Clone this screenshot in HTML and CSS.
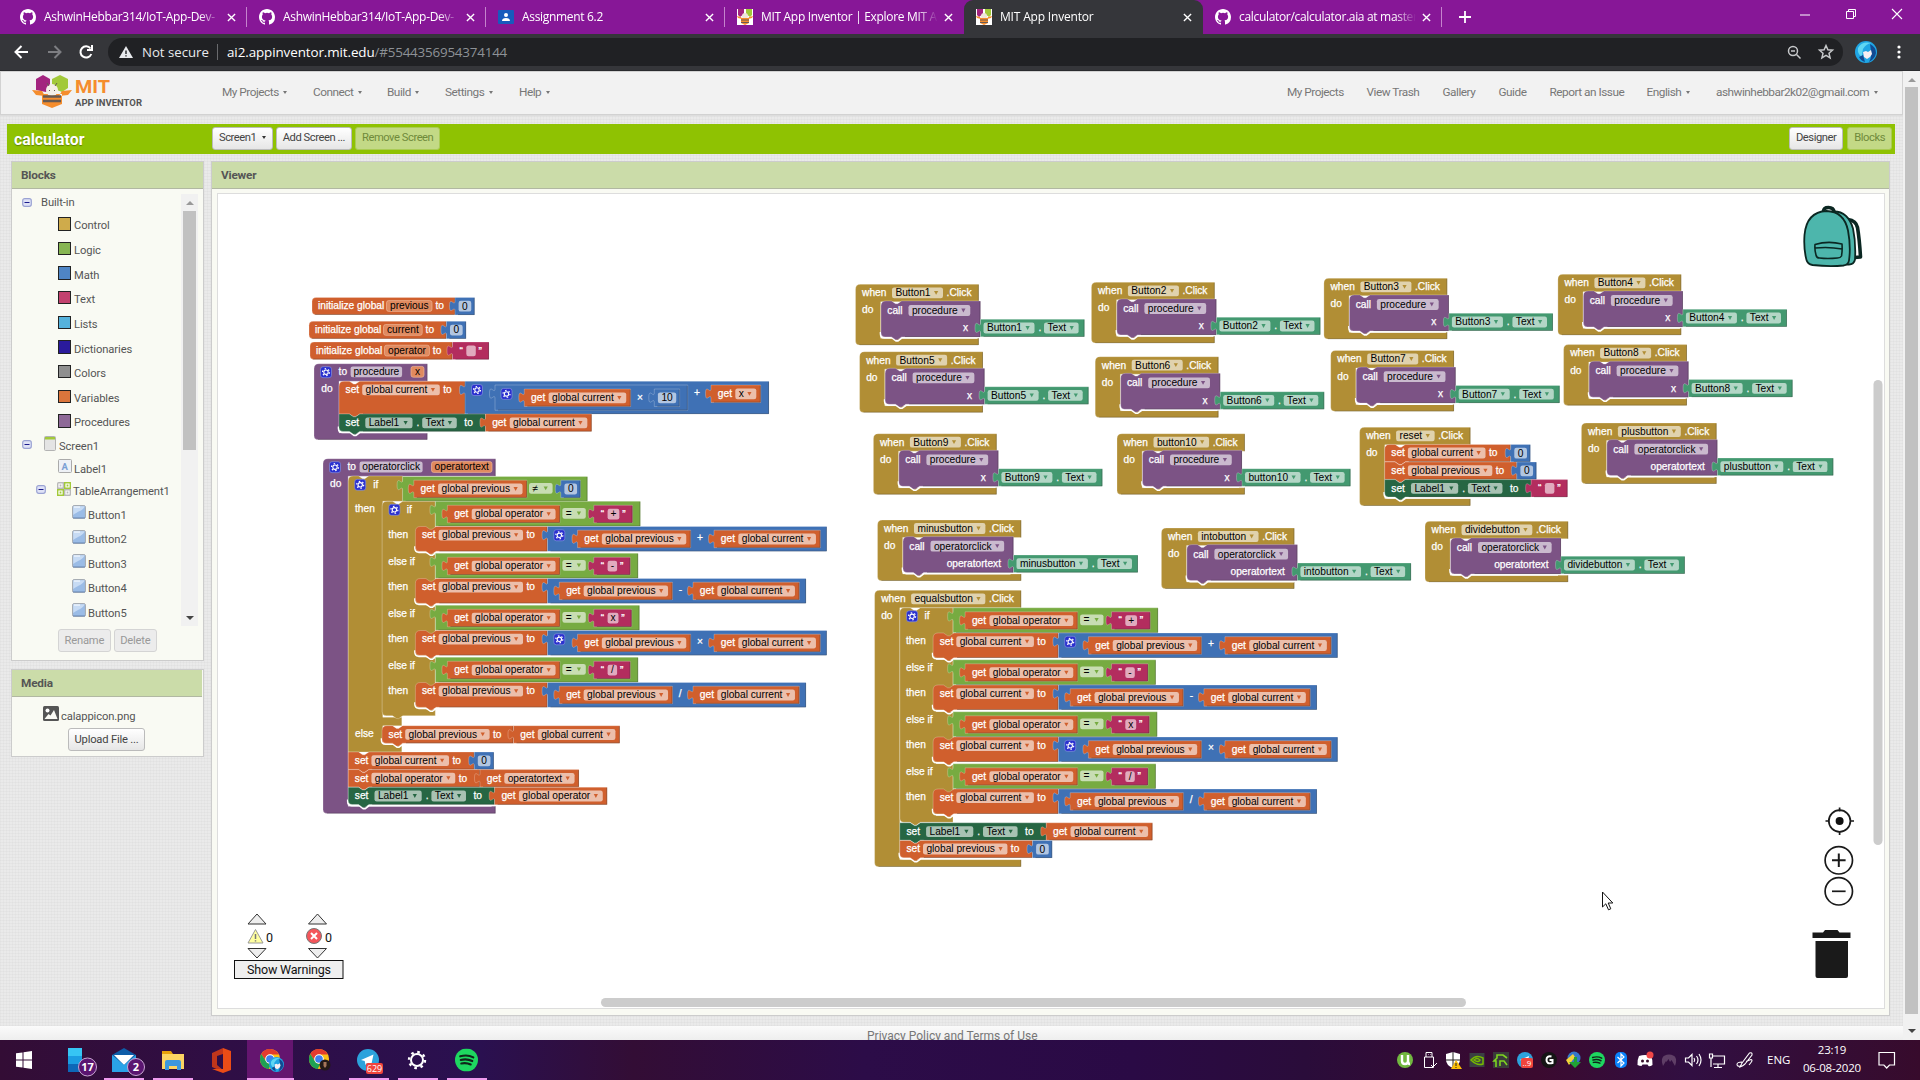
FILE: index.html
```html
<!DOCTYPE html>
<html lang="en">
<head>
<meta charset="utf-8">
<title>MIT App Inventor</title>
<link rel="stylesheet" href="styles.css">
</head>
<body>
<svg width="0" height="0" class="defs">
  <symbol id="github" viewBox="0 0 16 16"><path fill="#fff" d="M8 0C3.58 0 0 3.58 0 8c0 3.54 2.29 6.53 5.47 7.59.4.07.55-.17.55-.38 0-.19-.01-.82-.01-1.49-2.01.37-2.53-.49-2.69-.94-.09-.23-.48-.94-.82-1.13-.28-.15-.68-.52-.01-.53.63-.01 1.08.58 1.23.82.72 1.21 1.87.87 2.33.66.07-.52.28-.87.51-1.07-1.78-.2-3.64-.89-3.64-3.95 0-.87.31-1.59.82-2.15-.08-.2-.36-1.02.08-2.12 0 0 .67-.21 2.2.82a7.6 7.6 0 0 1 4 0c1.53-1.04 2.2-.82 2.2-.82.44 1.1.16 1.92.08 2.12.51.56.82 1.27.82 2.15 0 3.07-1.87 3.75-3.65 3.95.29.25.54.73.54 1.48 0 1.07-.01 1.93-.01 2.2 0 .21.15.46.55.38A8 8 0 0 0 16 8c0-4.42-3.58-8-8-8z"/></symbol>
  <symbol id="bee" viewBox="0 0 16 16"><rect width="16" height="16" fill="#fff"/><path fill="#a3247f" d="M1 0h6v5l-4 3-2-2z"/><path fill="#a2c93a" d="M9 0h6v6l-2 2-4-3z"/><path fill="#f58d2d" d="M0 7l4 1 1 2-4-1zM16 7l-4 1-1 2 4-1z"/><circle cx="8" cy="7" r="3" fill="#efe6da"/><path fill="#f58d2d" d="M4 9h8v5l-4 2-4-2z"/><path stroke="#6b5b52" d="M4 11h8M4 13.500h8"/></symbol>
  <symbol id="x" viewBox="0 0 10 10"><path stroke="#fff" stroke-width="1.500" d="M1 1l8 8M9 1l-8 8"/></symbol>
  <symbol id="minus" viewBox="0 0 10 9"><rect x=".7" y=".7" width="8.600" height="7.600" rx="2" fill="#dfe2f6" stroke="#9aa2d3" stroke-width="1.200"/><path d="M2.500 4.500h5" stroke="#1b1b8c"/></symbol>
  <symbol id="btn" viewBox="0 0 14 14"><rect x=".6" y=".6" width="12.800" height="12.800" rx="1.500" fill="#9bbce6" stroke="#a3a7ad"/><path fill="#c7dbf4" d="M1.200 1.200h11.500C11 6 6 6 1.200 10z"/><path d="M2 2h6" stroke="#fff"/><path d="M1 12.900h12" stroke="#6f8fbe"/></symbol>
  <symbol id="chrome" viewBox="0 0 24 24"><circle cx="12" cy="12" r="11" fill="#fbc116"/><path fill="#e33b2e" d="M2.500 6.500A11 11 0 0 1 21.600 7H12a5 5 0 0 0-4.500 7.200z"/><path fill="#1fa154" d="M2.500 6.500l5.300 8.300A5 5 0 0 0 13.500 17l-3 5.900A11 11 0 0 1 2.500 6.500z"/><circle cx="12" cy="12" r="5.200" fill="#fff"/><circle cx="12" cy="12" r="4.200" fill="#3f80ee"/></symbol>
  <symbol id="avatar" viewBox="0 0 22 22"><circle cx="11" cy="11" r="11" fill="#1fa5e4"/><path fill="#5fd6f3" d="M3 7q4-7 13-5-5 1-8 6-1 4-1 8-5-3-4-9z"/><path fill="#124a92" d="M15 3q6 3 6 9-1 6-7 9 3-5 2-11zM4 16l4-2 2 7q-4-1-6-5z"/><path fill="#f7eef2" d="M8 11l3-1 2 1 3-2 1 4-2 3-3 2-3-2z"/></symbol>
  <symbol id="spotify" viewBox="0 0 22 22"><circle cx="11" cy="11" r="11" fill="#1ed760"/><path fill="none" stroke="#10251a" stroke-width="2" stroke-linecap="round" d="M5 7.500q7-2 12.500 1M5.500 11q6-1.500 11 1M6 14.300q5-1 9 1"/></symbol>
  <symbol id="plane" viewBox="0 0 22 22"><circle cx="11" cy="11" r="11" fill="#2ca2dc"/><path fill="#fff" d="M4 11l12.500-5.500L14 17l-4-3-1.500 2-.8-4z"/></symbol>
</svg>

<div class="tabs">
  <div class="tab"><svg class="fav"><use href="#github"/></svg><span>AshwinHebbar314/IoT-App-Dev-</span><svg class="x"><use href="#x"/></svg></div>
  <div class="tab"><svg class="fav"><use href="#github"/></svg><span>AshwinHebbar314/IoT-App-Dev-</span><svg class="x"><use href="#x"/></svg></div>
  <div class="tab"><svg class="fav" viewBox="0 0 16 16"><rect y="1" width="16" height="14" rx="1" fill="#185abc"/><circle cx="8" cy="6" r="2" fill="#fff"/><path d="M4 12q0-3 4-3t4 3z" fill="#fff"/></svg><span>Assignment 6.2</span><svg class="x"><use href="#x"/></svg></div>
  <div class="tab nosep"><svg class="fav"><use href="#bee"/></svg><span>MIT App Inventor | Explore MIT A</span><svg class="x"><use href="#x"/></svg></div>
  <div class="tab active"><svg class="fav"><use href="#bee"/></svg><span>MIT App Inventor</span><svg class="x"><use href="#x"/></svg></div>
  <div class="tab"><svg class="fav"><use href="#github"/></svg><span>calculator/calculator.aia at master</span><svg class="x"><use href="#x"/></svg></div>
  <svg class="plus" viewBox="0 0 12 12"><path d="M6 0v12M0 6h12" stroke="#fff" stroke-width="1.800"/></svg>
  <div class="winbtns">
    <svg viewBox="0 0 46 28"><path d="M18 15h10" stroke="#fff"/></svg>
    <svg viewBox="0 0 46 28"><path d="M18.500 11.500h7v7h-7zM20.500 11v-1.500h7v7h-2" fill="none" stroke="#fff"/></svg>
    <svg viewBox="0 0 46 28"><path d="M18 9l10 10M28 9l-10 10" stroke="#fff" stroke-width="1.100"/></svg>
  </div>
</div>

<div class="toolbar">
  <svg class="nav" viewBox="0 0 108 36" fill="none" stroke-width="2"><path stroke="#fff" d="M28 18H16M21.500 12l-6 6 6 6"/><path stroke="#7d7e82" d="M48 18h12M54.500 12l6 6-6 6"/><path stroke="#fff" d="M90.500 14.500a5.600 5.600 0 1 0 .8 5.500M92 11v5h-5"/></svg>
  <div class="omni">
    <svg class="warn" viewBox="0 0 14 12"><path fill="#e8eaed" d="M7 0l7 12H0z"/><path stroke="#202124" stroke-width="1.400" d="M7 4.500v3.500M7 9.200v1.400"/></svg>
    <span class="ns">Not secure</span><i></i><span class="url">ai2.appinventor.mit.edu<em>/#5544356954374144</em></span>
    <svg class="omniicons" viewBox="0 0 60 28" fill="none" stroke="#c6c8ca" stroke-width="1.500"><circle cx="13" cy="13" r="4.500"/><path d="M16.500 16.500l4 4M11 13h4"/><path d="M46 7.500l1.900 4.300 4.600.4-3.500 3.100 1.100 4.600L46 17.400l-4.100 2.500 1.100-4.600-3.500-3.100 4.600-.4z"/></svg>
  </div>
  <svg class="avatar"><use href="#avatar"/></svg>
  <svg class="dots" viewBox="0 0 4 16" fill="#fff"><circle cx="2" cy="3" r="1.600"/><circle cx="2" cy="8" r="1.600"/><circle cx="2" cy="13" r="1.600"/></svg>
</div>

<div class="window">
  <div class="page">
    <header>
      <svg class="logo" viewBox="0 0 114 36">
        <path fill="#a3247f" d="M4 5l7-4 7 4v9l-4 4-10-2z"/><path fill="#a2c93a" d="M20 5l8-4 8 4v9l-6 4-10-4z"/>
        <path fill="#f58d2d" d="M0 16l10 1 3 5-9-1zM40 16l-10 1-3 5 9-1zM10 20h20v10l-5 2-5 2-5-2-5-2z"/><circle cx="20" cy="16" r="6" fill="#f4efe8"/><path stroke="#665a52" stroke-width="2.400" d="M11 22.500h18M11 27h18"/><path stroke="#665a52" d="M17 12l-2-3M23 12l2-3M17.500 16v1M22.500 16v1"/>
        <text x="43" y="19" class="mit" textLength="35" lengthAdjust="spacingAndGlyphs">MIT</text><text x="43" y="31.500" class="ai" textLength="67" lengthAdjust="spacingAndGlyphs">APP INVENTOR</text>
      </svg>
      <nav class="left"><a>My Projects <b></b></a><a>Connect <b></b></a><a>Build <b></b></a><a>Settings <b></b></a><a>Help <b></b></a></nav>
      <nav class="right"><a>My Projects</a><a>View Trash</a><a>Gallery</a><a>Guide</a><a>Report an Issue</a><a>English <b></b></a><a>ashwinhebbar2k02@gmail.com <b></b></a></nav>
    </header>
    <div class="project">
      <h1>calculator</h1>
      <button>Screen1 <b></b></button><button>Add Screen ...</button><button class="off">Remove Screen</button>
      <button class="end">Designer</button><button class="off">Blocks</button>
    </div>
    <main>
      <aside>
        <section class="panel blocks">
          <h2>Blocks</h2>
          <div class="tree">
            <ul>
              <li class="root"><svg><use href="#minus"/></svg>Built-in</li>
              <li class="cat"><i class="c1"></i>Control</li><li class="cat"><i class="c2"></i>Logic</li><li class="cat"><i class="c3"></i>Math</li><li class="cat"><i class="c4"></i>Text</li><li class="cat"><i class="c5"></i>Lists</li><li class="cat"><i class="c6"></i>Dictionaries</li><li class="cat"><i class="c7"></i>Colors</li><li class="cat"><i class="c8"></i>Variables</li><li class="cat"><i class="c9"></i>Procedures</li>
              <li class="scr"><svg class="m"><use href="#minus"/></svg><svg class="ic" viewBox="0 0 12 15"><rect x=".5" y=".5" width="11" height="14" rx="1" fill="#e4e4e4" stroke="#b3b3b3"/><path fill="#a2c93a" d="M1 1h10v2.500H1z"/></svg>Screen1</li>
              <li class="lab"><svg class="ic" viewBox="0 0 14 14"><rect x=".5" y=".5" width="13" height="13" rx="1" fill="#eef1f6" stroke="#aaa"/><text x="3.500" y="10.800" class="A">A</text></svg>Label1</li>
              <li class="tab1"><svg class="m"><use href="#minus"/></svg><svg class="ic" viewBox="0 0 14 14"><rect width="14" height="14" rx="1.500" fill="#b9b9b9"/><path fill="#a2c93a" d="M7 0h7v7H7zM0 7h7v7H0z"/><path fill="none" stroke="#fff" stroke-width="1.200" d="M2 2h3v3H2zM9 2h3v3H9zM2 9h3v3H2zM9 9h3v3H9z"/></svg>TableArrangement1</li>
              <li class="b"><svg><use href="#btn"/></svg>Button1</li><li class="b"><svg><use href="#btn"/></svg>Button2</li><li class="b"><svg><use href="#btn"/></svg>Button3</li><li class="b"><svg><use href="#btn"/></svg>Button4</li><li class="b"><svg><use href="#btn"/></svg>Button5</li>
            </ul>
            <div class="scroll small"><u></u><s></s><u class="dn"></u></div>
          </div>
          <div class="actions"><button class="grey">Rename</button><button class="grey">Delete</button></div>
        </section>
        <section class="panel media">
          <h2>Media</h2>
          <p><svg viewBox="0 0 16 15"><rect width="16" height="15" rx="1.500" fill="#555"/><path fill="#fafaf4" d="M1.500 13l4-5 2 1.500L11 4l3.500 9z"/><circle cx="4.500" cy="4.500" r="2" fill="#fff"/></svg>calappicon.png</p>
          <button>Upload File ...</button>
        </section>
      </aside>
      <section class="panel viewer">
        <h2>Viewer</h2>
        <svg id="workspace" viewBox="218 194 1666 814">
          <g id="blocks"></g>
          <g class="line">
            <path class="tri" d="M257 914l9 10h-18zM317.500 914l9 10h-18zM257 958l9-9.500h-18zM317.500 958l9-9.500h-18z"/>
            <path d="M255.500 929.500l7.500 13.500h-15z" fill="#ffffa0" stroke="#999"/><path d="M255.500 934v5M255.500 940.300v1.200" stroke="#777" stroke-width="1.500"/>
            <circle cx="314" cy="936" r="7.500" fill="#f4565b" stroke="#777"/><path d="M311 933l6 6M317 933l-6 6" stroke="#fff" stroke-width="2"/>
            <rect x="234.500" y="960.500" width="108.500" height="18" fill="#efefef" stroke="#111"/>
          </g>
          <g class="wtext"><text x="266" y="942">0</text><text x="325" y="942">0</text><text x="247" y="974" textLength="84">Show Warnings</text></g>
          <rect x="601" y="998" width="865" height="9" rx="4.500" fill="#ccc"/>
          <rect x="1873.500" y="380" width="9" height="465" rx="4.500" fill="#ccc"/>
          <g fill="none" stroke="#1a1a1a" stroke-width="1.700">
            <circle cx="1839.600" cy="821" r="10.800"/><circle cx="1839.600" cy="821" r="4" fill="#111" stroke="none"/><path d="M1839.600 807.500v4M1839.600 831v4M1825.500 821h4M1850 821h4"/>
            <circle cx="1838.800" cy="860.300" r="13.700"/><path d="M1832 860.300h13.600M1838.800 853.500v13.600" stroke-width="2"/>
            <circle cx="1838.800" cy="891.300" r="13.700"/><path d="M1832 891.300h13.600"/>
          </g>
          <path fill="#1a1a1a" d="M1812.500 932.500h10.500l2-2.500h12.500l2 2.500h11v5.500h-38zM1815.500 941h32.500v35q0 2-2 2h-28.500q-2 0-2-2z"/>
          <g stroke="#0b2722" stroke-width="1.800" fill="#4db6ac" stroke-linejoin="round">
            <path fill="none" stroke-width="3.500" d="M1823.500 211.500q0-4 5-4t6 5"/>
            <path fill="none" stroke-width="3.600" d="M1848 219.500q8 1 9.500 8 2 12 3 29.500l-6 .5"/>
            <path d="M1834 211.500q14 0 19 17 3 14 2 31-1 5-6 5h-10z"/>
            <path d="M1826.500 211q-20 1-22 24-1 14 2 25 1 4 6 5 17 2 31 .5 5-1 5.500-5 2-14-1-30-4-19-21.500-19.500z"/>
            <path d="M1815 244.500q13-4 27-.5.500 7-.5 12-1 2-4 2-10 1-18 0-3 0-3.500-3-1.500-5-1-10.500zM1815 248q14-1.500 27 1" stroke-width="1.600"/>
          </g>
          <path fill="#fff" stroke="#111" d="M1602.500 892v15l3.300-3.200 2.700 6 2.300-1-2.600-5.800h4.600z"/>
        </svg>
      </section>
    </main>
    <footer>Privacy Policy and Terms of Use</footer>
  </div>
  <div class="scroll big"><u></u><s></s><u class="dn"></u></div>
</div>

<div class="taskbar">
  <div class="apps">
    <div class="app"><svg viewBox="0 0 49 40"><path fill="#fff" d="M16 13.300l6.500-.9v7.200H16zM23.500 12.300l8.500-1.200v8.500h-8.500zM16 20.500h6.500v7.100l-6.500-.9zM23.500 20.500H32v8.400l-8.500-1.200z"/></svg></div>
    <div class="app"><svg viewBox="0 0 49 40"><path fill="#36c5f4" d="M19 8h14v8H19z"/><path fill="#1b9de2" d="M19 16h14v8H19z"/><path fill="#0d67b8" d="M19 24h14v8H19z"/><circle cx="38.500" cy="27" r="9" fill="#5a1570" stroke="#c9a6d3"/><text x="38.500" y="31" class="bd">17</text></svg></div>
    <div class="app on"><svg viewBox="0 0 49 40"><path fill="#0f5da8" d="M14 15l12-7 12 7v16H14z"/><path fill="#fff" d="M16 15h20l-10 10z"/><path fill="#2aa3e8" d="M14 15l12 10 12-10v17H14z"/><circle cx="38" cy="27" r="8.500" fill="#5a1570" stroke="#c9a6d3"/><text x="38" y="31" class="bd">2</text></svg></div>
    <div class="app on wide"><svg viewBox="0 0 49 40"><path fill="#e7a10b" d="M15 11h9l2 3h11v4H15z"/><path fill="#fcd462" d="M15 14h22v15H15z"/><path fill="#3b97dd" d="M18 22q0-2 2-2h12q2 0 2 2v8h-4v-4h-8v4h-4z"/></svg></div>
    <div class="app"><svg viewBox="0 0 49 40"><path fill="#c1361b" d="M16 13l11-5v6l-6 2v9l6 5v2l-11-5z"/><path fill="#ea4c16" d="M27 8l8 3v19l-8 3-11-4h11z"/></svg></div>
    <div class="app on active"><svg viewBox="0 0 49 40"><use href="#chrome" x="14" y="8" width="22" height="22"/><use href="#avatar" x="24" y="17" width="15" height="15"/></svg></div>
    <div class="app"><svg viewBox="0 0 49 40"><use href="#chrome" x="14" y="8" width="22" height="22"/><circle cx="31" cy="25" r="5.500" fill="#241a17"/><path fill="#a5765b" d="M29.500 22h3v4l-1.500 2-1.500-2z"/></svg></div>
    <div class="app on"><svg viewBox="0 0 49 40"><use href="#plane" x="14" y="8" width="22" height="24"/><rect x="23" y="23" width="17" height="11" rx="2" fill="#f0443c"/><text x="31.500" y="31.800" class="bd s">629</text></svg></div>
    <div class="app on"><svg viewBox="0 0 49 40" fill="none" stroke="#fff"><circle cx="25" cy="20" r="6" stroke-width="2"/><circle cx="25" cy="20" r="8" stroke-width="2.400" stroke-dasharray="2.600 3.683"/></svg></div>
    <div class="app on"><svg viewBox="0 0 49 40"><use href="#spotify" x="14" y="8.500" width="23" height="23"/></svg></div>
  </div>
  <div class="tray">
    <svg viewBox="0 0 24 24"><circle cx="12" cy="12" r="8" fill="#72b840"/><path fill="none" stroke="#fff" stroke-width="2.400" d="M9 7v6q0 3 3 3t3-3V7M15 13q0 3 2 3"/></svg>
    <svg viewBox="0 0 24 24" fill="none" stroke="#fff"><path d="M9 9V4.500h6V9M7.500 9h9v10.500h-9zM11 6.500h.5M13 6.500h.5M14 17l2 2 4-4"/></svg>
    <svg viewBox="0 0 24 24"><path fill="#fff" d="M5 6l7-2 7 2v6q0 5-7 8-7-3-7-8z"/><path stroke="#222" d="M12 4v16M5 12h14"/><path fill="#fbbc05" d="M15 12l6 9H10z"/><path stroke="#222" d="M15 15v3M15 19v1"/></svg>
    <svg viewBox="0 0 24 24"><path fill="#3a4043" d="M4.500 5h15v14h-15z"/><path fill="none" stroke="#76b900" stroke-width="1.500" d="M6 12q5-6 12-2v6q-6 2-12-4zM9 12q3-3 6 0-2 3-6 0z"/></svg>
    <svg viewBox="0 0 24 24"><path fill="#3a3b3a" d="M4 4h16v16H4z"/><path fill="none" stroke="#7ed321" stroke-width="1.600" d="M7 19v-6H5l3-3V7h6l4 3M11 18v-5h4l3 4"/></svg>
    <svg viewBox="0 0 24 24"><use href="#plane" x="4" y="4" width="16" height="16"/><rect x="8" y="10" width="12" height="10" rx="2" fill="#f0443c"/><text x="14" y="18" class="bd t">..9</text></svg>
    <svg viewBox="0 0 24 24"><circle cx="12" cy="12" r="8" fill="#151515"/><path fill="none" stroke="#fff" stroke-width="2" d="M14.500 8.500q-5-1-5 3.500t6 3v-3h-3"/></svg>
    <svg viewBox="0 0 24 24"><circle cx="13" cy="10" r="6.500" fill="#3577c9"/><path fill="#f4d33a" d="M5 12l7-6 2 3-6 8z"/><path fill="#21a336" d="M13 9h3v5h4l-6 6-6-6h5z"/></svg>
    <svg viewBox="0 0 24 24"><use href="#spotify" x="4" y="4" width="16" height="16"/></svg>
    <svg viewBox="0 0 24 24"><rect x="6" y="4" width="12" height="16" rx="5" fill="#0a82fa"/><path fill="none" stroke="#fff" stroke-width="1.200" d="M8.500 9l6.500 6-3 3V6l3 3-6.500 6"/></svg>
    <svg viewBox="0 0 24 24"><path fill="#fff" d="M6 8q6-2 12 0 2 4 1.500 9-3 2-4 1l-1-1.500h-5L8.500 18q-2 0-4-1Q4 12 6 8z"/><circle cx="9.500" cy="13" r="1.500" fill="#38102c"/><circle cx="14.500" cy="13" r="1.500" fill="#38102c"/><circle cx="17" cy="7" r="3.500" fill="#f04747"/></svg>
    <svg viewBox="0 0 24 24"><path fill="#5f3f66" d="M6 18q-4-11 6-11.500Q22 7 18 18l-3.500-6-1.500 2-1.500-3-2 3-.5-1z"/></svg>
    <svg viewBox="0 0 24 24" fill="none" stroke="#fff" stroke-width="1.200"><path d="M4.500 10h3L11 6.500v11L7.500 14h-3zM13 10q1.500 2 0 4M15.500 8q3 4 0 8M18 6q4 6 0 12"/></svg>
    <svg viewBox="0 0 24 24" fill="none" stroke="#fff" stroke-width="1.200"><path d="M8 8h11.500v8H8M13 16v3M9 19.500h8M4.500 6h3v4h-3zM6 10v9"/></svg>
    <svg viewBox="0 0 24 24" fill="none" stroke="#fff" stroke-width="1.100"><path d="M9 15L16.500 5q3-1 2.500 2l-7 9q-2 2-5 3 1-2 2-4zM9 14q-5 0-5 2.500T8.500 18M13 13.500l5-2q2 .5 0 3l-2 2.500"/></svg>
  </div>
  <span class="lang">ENG</span>
  <div class="clock">23:19<br>06-08-2020</div>
  <svg class="note" viewBox="0 0 18 18"><path fill="none" stroke="#fff" stroke-width="1.200" d="M1 1.500h15.500v12.500h-5l-2.800 3-2.800-3H1z"/></svg>
</div>
<script src="blocks.js"></script>
</body>
</html>
```
FILE: styles.css
```css
* { box-sizing: border-box; }
body { margin: 0; width: 1920px; height: 1080px; overflow: hidden; display: flex; flex-direction: column; font: 12px Roboto, sans-serif; background: #e9e9e9; }
svg { display: block; flex: none; }
.defs { position: absolute; }
ul, h1, h2, p { margin: 0; padding: 0; list-style: none; }
b { display: inline-block; border: 2.500px solid transparent; border-top: 3.500px solid #777; border-bottom: 0; margin-left: 2px; vertical-align: 2px; }

.tabs { height: 34px; flex: none; background: #871797; display: flex; align-items: center; padding-left: 8px; color: #fff; font: 12px "Open Sans", sans-serif; }
.tab { width: 239px; height: 34px; display: flex; align-items: center; padding: 0 11px 0 12px; }
.tab:not(.active):not(.nosep) { background: linear-gradient(#c583cd, #c583cd) right center / 1px 20px no-repeat; }
.tab span { flex: 1; margin: -1px 6px 0 8px; overflow: hidden; white-space: nowrap; letter-spacing: -.32px; -webkit-mask: linear-gradient(90deg, #000 88%, transparent); mask: linear-gradient(90deg, #000 88%, transparent); }
.tab.active { background: #35363a; border-radius: 9px 9px 0 0; }
.tab.active span { letter-spacing: -.18px; }
.fav { width: 16px; height: 16px; }
.x { width: 9px; height: 9px; }
.plus { width: 12px; height: 12px; margin-left: 17px; }
.winbtns { display: flex; margin-left: auto; }
.winbtns svg { width: 46px; height: 28px; margin-top: -6px; }

.toolbar { height: 37px; flex: none; background: #35363a; border-bottom: 1px solid #2a2b2e; display: flex; align-items: center; }
.nav { width: 108px; height: 36px; }
.omni { width: 1735px; height: 28px; border-radius: 14px; background: #202124; display: flex; align-items: center; padding-left: 11px; color: #fff; font: 14px "Open Sans", sans-serif; }
.warn { width: 14px; height: 12px; }
.ns { margin-left: 9px; width: 75px; font-size: 13.200px; white-space: nowrap; color: #e8eaed; }
.omni i { width: 1px; height: 16px; background: #696a6d; margin-right: 9px; }
.url { font-size: 13.400px; letter-spacing: -.09px; }
.url em { font-style: normal; color: #8d9196; letter-spacing: -.2px; }
.omniicons { width: 60px; height: 28px; margin-left: auto; margin-right: 3px; }
.avatar { width: 22px; height: 22px; margin-left: 12px; }
.dots { width: 4px; height: 16px; margin-left: 20px; }

.window { flex: 1; min-height: 0; display: flex; }
.page { width: 1903px; display: flex; flex-direction: column; background: repeating-linear-gradient(90deg, rgba(0,0,0,.018) 0 1px, transparent 1px 3px), repeating-linear-gradient(rgba(0,0,0,.022) 0 1px, transparent 1px 3px), #eaeaea; }
header { height: 44px; flex: none; border: 1px solid #d2d2d2; background: #f2f2f2; display: flex; align-items: center; color: #777; font-size: 11.800px; letter-spacing: -.48px; box-shadow: 0 1px 1px #ddd; }
.logo { width: 114px; height: 36px; margin: -3px 0 0 31px; letter-spacing: 0; }
.mit { font: bold 19px Roboto, sans-serif; fill: #f58d2d; }
.ai { font: bold 9.500px Roboto, sans-serif; fill: #555; }
nav { display: grid; white-space: nowrap; margin-top: -2px; }
nav.left { margin-left: 76px; grid-template-columns: 91px 74px 58px 74px 60px; }
nav.right { margin-left: auto; margin-right: 4px; grid-template-columns: 79.500px 76px 56px 51px 97px 69.500px 182px; }

.project { height: 30px; flex: none; margin: 9px 8px 7px 7px; background: #8fc202; display: flex; gap: 3px; padding-top: 3px; align-items: flex-start; }
h1 { width: 202px; padding-left: 7px; color: #fff; font: bold 15.800px/26px Roboto, sans-serif; text-shadow: 0 1px 1px #5f8000; }
button { height: 23px; padding: 0 6px; border: 1px solid #bbb; border-radius: 3px; background: linear-gradient(#fff, #e6e6e6); font: 11.200px/19px Roboto, sans-serif; color: #444; white-space: nowrap; letter-spacing: -.45px; }
.project button { padding-bottom: 2px; }
.project b { border-top-color: #333; margin-left: 3px; }
.off { background: #c3d986; border-color: #aacb55; color: #6f8a3b; }
.end { margin-left: auto; }
.project button:last-child { margin: 0 3px 0 1px; }

main { display: flex; gap: 7px; padding-left: 11px; flex: none; height: 865px; }
aside { width: 193px; display: flex; flex-direction: column; gap: 8px; }
.panel { border: 1px solid #ccc; background: #f9faf3; display: flex; flex-direction: column; }
h2 { height: 27px; flex: none; background: #cbdca9; border-bottom: 1px solid #b1b8a2; font: bold 11.800px/26px Roboto, sans-serif; letter-spacing: -.2px; color: #555; padding-left: 9px; }
.blocks { height: 500px; }
.tree { display: flex; height: 432px; margin: 5px 5px 0 0; justify-content: space-between; font-size: 11.200px; color: #555; letter-spacing: -.08px; }
.tree li { display: flex; align-items: center; height: 24.650px; }
.tree .root { height: 19.500px; padding-bottom: 2px; }
.root svg, .m { width: 10px; height: 9px; }
.root svg { margin: 0 9px 0 10px; }
.cat { padding-left: 46px; }
.cat i { width: 13px; height: 13.500px; border: 1px solid #222; margin-right: 3px; margin-top: -4px; }
.c1 { background: #cfab4b; } .c2 { background: #86b552; } .c3 { background: #4f85c5; } .c4 { background: #c3426f; } .c5 { background: #55b2dc; } .c6 { background: #2a1a9c; } .c7 { background: #8f8f8f; } .c8 { background: #db753c; } .c9 { background: #8e6997; }
.tree .scr, .tree .lab, .tree .tab1 { height: 22.500px; }
.scr .m { margin: -4px 12px 0 10px; }
.scr .ic { width: 12px; height: 15px; margin: -6px 3px 0 0; }
.lab .ic { width: 14px; height: 14px; margin: -6px 2px 0 46px; }
.A { font: bold 9.500px Roboto, sans-serif; fill: #7b9fd4; }
.tab1 .m { margin: -4px 11px 0 24px; }
.tab1 .ic { width: 14px; height: 14px; margin: -5px 2px 0 0; }
.tree .b { height: 24.500px; }
.b svg { width: 14px; height: 14px; margin: -6px 2px 0 60px; }
.scroll { display: flex; flex-direction: column; align-items: center; background: #f1f1f1; width: 17px; }
.scroll u { border: 4px solid transparent; border-top: 0; border-bottom: 4px solid #999; }
.scroll .dn { border-top: 4px solid #444; border-bottom: 0; margin-top: auto; }
.scroll s { background: #c1c1c1; width: 13px; }
.small u { margin: 7px 0 6px; } .small s { height: 239px; }
.big u { margin: 7px 0 5px; } .big s { height: 927px; } .big .dn { margin-bottom: 7px; }
.actions { display: flex; gap: 3px; padding: 3px 0 0 46px; }
.actions button, .media button { letter-spacing: -.2px; }
.grey { background: #ececec; border-color: #d4d4d4; color: #999; padding: 0 5.500px; }
.media { height: 88px; align-items: flex-start; }
.media h2 { width: 190px; }
.media p { display: flex; height: 31px; padding: 8px 0 0 31px; font-size: 11.200px; color: #555; align-items: center; gap: 2px; letter-spacing: -.12px; }
.media p svg { width: 16px; height: 15px; margin-top: -6px; }
.media button { margin-left: 56px; padding: 0 5.500px; }
.viewer { width: 1679px; height: 855px; }
#workspace { width: 1668px; height: 816px; margin: 4px 0 0 5px; border: 1px solid #ddd; background: #fff; }
.line { stroke-width: 1; }
.tri { fill: #eee; stroke: #333; }
.wtext { font: 12.500px Roboto, sans-serif; fill: #111; }
footer { flex: 1; background: linear-gradient(#fbfbfb, #eee); overflow: hidden; color: #777; font-size: 12px; line-height: 21px; padding-left: 867px; }

#blocks text { font: 10.200px "Liberation Sans", sans-serif; fill: #fff; stroke: #fff; stroke-width: .25; }
#blocks text.f { fill: #000; stroke: none; }

.taskbar { height: 40px; flex: none; display: flex; align-items: center; color: #fff; background: linear-gradient(90deg, #330d35 0, #2f0e45 12%, #2a1050 25%, #330d35 33%, #2c0c48 45%, #2a0a45 59%, #2a0c3a 68%, #3b0a2f 80%, #310f42 88%, #370b2c 100%); font: 12px "Open Sans", sans-serif; }
.apps { display: flex; }
.app { width: 49px; height: 40px; }
.app svg { width: 49px; height: 40px; }
.on { background: linear-gradient(#ee9bee, #ee9bee) 6px 38px / 40px 2px no-repeat; }
.app.active { background: linear-gradient(#ee9bee, #ee9bee) 2px 38px / 48px 2px no-repeat, linear-gradient(#64156f, #64156f) 2px 0 / 46px 40px no-repeat; }
.bd { font: bold 11px "Open Sans", sans-serif; fill: #fff; text-anchor: middle; }
.bd.s { font: 9px "Open Sans", sans-serif; }
.bd.t { font: 8px "Open Sans", sans-serif; }
.tray { margin-left: auto; display: flex; }
.tray svg { width: 24px; height: 24px; }
.tray svg:last-child { margin-left: 4px; }
.lang { width: 24px; margin-left: 10px; font-size: 11.500px; margin-top: -2px; }
.clock { width: 70px; margin: -2px 0 0 6px; text-align: center; line-height: 18.500px; font-size: 11.500px; white-space: nowrap; letter-spacing: -.2px; }
.note { width: 18px; height: 18px; margin: 0 24px 0 11px; }
```
FILE: blocks.js
```js
const C = { var: '#d05f2d', math: '#3f71b5', ctl: '#b18e35', proc: '#7c5385', logic: '#77ab41', text: '#b32d5e', set: '#266643', get: '#439970' };
const ctx = document.createElement('canvas').getContext('2d');
ctx.font = '10.2px "Liberation Sans"';
const tw = s => ctx.measureText(s).width;
let out = '';

// plain label, field (editable), and dropdown; cy is the vertical centre
const label = (x, cy, s, cls = '') => { out += `<text class="${cls}" x="${x}" y="${cy + 3.3}">${s}</text>`; };
const box = (x, cy, w, o = 0.6) => { out += `<rect x="${x}" y="${cy - 5.4}" width="${w}" height="10.8" rx="2.2" fill="#fff" fill-opacity="${o}"/>`; };
const field = (x, cy, s, w = tw(s) + 7) => { box(x, cy, w); label(x + (w - tw(s)) / 2, cy, s, 'f'); };
const tint = (x, w, cy, s) => {
  out += `<rect x="${x}" y="${cy - 5.4}" width="${w}" height="10.8" rx="2.2" fill="#e08a5f" stroke="#eeb595" stroke-width=".7"/>`;
  label(x + (w - tw(s)) / 2, cy, s, 'f');
};
const drop = (x, cy, s, color, w = tw(s) + 15.9) => {
  box(x, cy, w);
  label(x + 3.4, cy, s, 'f');
  out += `<path fill="${color}" d="M${x + w - 9} ${cy - 1.9}h4.200l-2.100 3.800z"/>`;
  return x + w;
};
const gear = (cx, cy) => {
  out += `<rect x="${cx - 5.5}" y="${cy - 5.5}" width="11" height="11" rx="2.500" fill="#2a30cf" stroke="#8f9be0" stroke-width=".6"/>` +
    `<circle cx="${cx}" cy="${cy}" r="2.200" fill="none" stroke="#fff" stroke-width="1.100"/><circle cx="${cx}" cy="${cy}" r="3.500" fill="none" stroke="#fff" stroke-width="1.200" stroke-dasharray="1.500 2.160"/>`;
};

const shape = (c, d, x, y, w, h) => {
  out += `<path d="${d}" fill="${c}" stroke="#fff" stroke-opacity=".3" stroke-width=".8"/>` +
    `<path d="M${x + 3} ${y + h - 0.3}H${x + w - 0.4}V${y + 0.5}" fill="none" stroke="#000" stroke-opacity=".28" stroke-width=".9"/>`;
};
const value = (c, x, y, w, h = 17.5) =>
  shape(c, `M${x} ${y}h${w}v${h}h${-w}V${y + 13.8}c0-6.900-5.500 5.500-5.500-5.200s5.500 1.700 5.500-5.200z`, x, y, w, h);
const stmt = (c, x, y, w, h, first, last) => {
  const r = first ? 5 : 0, q = last ? 4 : 0;
  if (last) out += `<path d="M${x - 0.5} ${y + h - 5}v2q0 4 4 4H${x + 11}l4 3h2l4-3H${x + w - 3}" fill="none" stroke="#fff" stroke-width="1.600"/>`;
  shape(c, `M${x} ${y + r}q0 ${-r} ${r} ${-r}H${x + 10.4}l4.100 2.800h2.100l4.100-2.800H${x + w}v${h}H${x + 20.7}l-4.100 2.800h-2.100l-4.100-2.800H${x + q}q${-q} 0 ${-q} ${-q}z`, x + 21, y, w - 21, h);
};
// C-shaped hat: header strip, left spine, closing arm
const hat = (c, x, y, head, inner, h, armTop) => {
  const a = armTop - y;
  out += `<path fill="${c}" stroke="#fff" stroke-opacity=".3" stroke-width=".8" d="M${x} ${y + 5}q0-5 5-5h${head - 5}v17.500H${x + inner}V${y + a}H${x + head}V${y + h}H${x + 4}q-4 0-4-4z"/>` +
    `<path fill="none" stroke="#000" stroke-opacity=".25" stroke-width=".9" d="M${x + head - 0.4} ${y + 0.5}v17M${x + 4} ${y + h - 0.3}H${x + head - 0.4}V${y + a}"/>`;
};

const getVar = (x, y, name) => {
  value(C.var, x, y, tw(name) + 44.6);
  label(x + 6.8, y + 8.8, 'get');
  drop(x + 24.3, y + 8.8, name, C.var);
};
const num = (x, y, n = '0') => { const w = tw(n) + 14; value(C.math, x, y, w); field(x + 3.6, y + 8.8, n); };
const str = (x, y, s) => {
  const f = Math.max(9.5, tw(s) + 5.8);
  value(C.text, x, y, f + 27);
  label(x + 7, y + 9.3, '“'); box(x + 13.8, y + 8.8, f); label(x + 13.8 + (f - tw(s)) / 2, y + 8.8, s, 'f'); label(x + f + 16.6, y + 9.3, '”');
};
const setVar = (x, y, w, name, h, first, last) => {
  stmt(C.var, x, y, w, h, first, last);
  label(x + 6.6, y + 8.6, 'set');
  label(drop(x + 23.2, y + 8.6, name, C.var) + 3.4, y + 8.6, 'to');
};
const setLabel = (x, y, last) => {
  stmt(C.set, x, y, 146.4, 17.4, false, last);
  label(x + 6.6, y + 8.8, 'set');
  drop(x + 26.3, y + 8.8, 'Label1', C.set, 47.2);
  label(x + 77.5, y + 8.8, '.');
  drop(x + 83.2, y + 8.8, 'Text', C.set);
  label(x + 125.3, y + 8.8, 'to');
};

const when = (x, y, name, h, armTop) => {
  const fw = tw(name) + 15.9;
  hat(C.ctl, x, y, fw + 72.3, 25.2, h, armTop);
  label(x + 6.6, y + 8.5, 'when');
  label(drop(x + 36.5, y + 8.5, name, C.ctl) + 3.6, y + 8.5, '.Click');
  label(x + 6.6, y + 25.7, 'do');
};
const handler = (x, y, name, proc, arg) => {
  when(x, y, name, 60.8, y + 54);
  const w = proc === 'procedure' ? 99.5 : 110.5, cx = x + 25.5, cy = y + 16.6;
  stmt(C.proc, cx, cy, w, 36, true, true);
  label(cx + 6.3, cy + 9.6, 'call');
  drop(cx + 27.5, cy + 9.6, proc, C.proc);
  label(cx + w - 12.5 - tw(arg), cy + 27, arg);
  const gx = cx + w, gy = y + 35, fw = tw(name) + 15.9;
  value(C.get, gx, gy, fw + 53);
  const e = drop(gx + 3, gy + 8.7, name, C.get);
  label(e + 3.9, gy + 8.7, '.');
  drop(e + 9.5, gy + 8.7, 'Text', C.get);
};

// the four-way operator comparison shared by both procedures
const operatorIf = (x, y, target) => {
  out += `<path fill="${C.ctl}" stroke="#fff" stroke-opacity=".35" stroke-width=".8" d="M${x} ${y + 5}q0-5 5-5h5.400l4.100 2.800h2.100l4.100-2.800h32.500v214.500H${x + 20.7}l-4.100 2.800h-2.100l-4.100-2.800H${x + 4}q-4 0-4-4z"/>`;
  gear(x + 12.3, y + 8.5);
  [['+', '+', 1], ['-', '-', 0], ['x', '×', 1], ['/', '/', 0]].forEach(([s, op, g], i) => {
    const ry = y + i * 52, gx = x + 53.3, sx = x + 33.3, sy = ry + 25.2;
    label(i ? x + 6.2 : x + 24.7, ry + 8.2, i ? 'else if' : 'if');
    label(x + 6.2, ry + 33, 'then');
    const f = Math.max(9.5, tw(s) + 5.8);
    value(C.logic, gx, ry, 193.2 + f, 25);
    getVar(gx + 12, ry + 4, 'global operator');
    drop(gx + 127, ry + 12, '=', C.logic, 23.4);
    str(gx + 158.4, ry + 4, s);
    // white gap where the nested statement stops short of the next row
    out += `<path fill="#fff" d="M${sx + 3} ${sy + 25}H${x + 330}v1.800H${sx + 3}z"/>`;
    const w = tw('global ' + target) + 63.6, mx = sx + w;
    setVar(sx, sy, w, 'global ' + target, 24.8, true, true);
    value(C.math, mx, sy, g ? 279.3 : 258.5, 24.8);
    if (g) gear(mx + 11.8, sy + 8.8);
    const px = mx + (g ? 30 : 11.8);
    getVar(px, sy + 3.7, 'global previous');
    label(px + 119.5, sy + 11, op);
    getVar(px + (g ? 136.5 : 133.7), sy + 3.7, 'global current');
  });
};

// global variable initialisers
[[312, 297.4, 'previous', 143], [309, 321.3, 'current', 137.4], [310, 342, 'operator', 142.5]].forEach(([x, y, name, w], i) => {
  shape(C.var, `M${x} ${y + 4}q0-4 4-4h${w - 4}v17.400h${4 - w}q-4 0-4-4z`, x, y, w, 17.4);
  label(x + 6, y + 8.6, 'initialize global');
  const f = tw(name) + 7;
  tint(x + 74.5, f, y + 8.6, name);
  label(x + 77.9 + f, y + 8.6, 'to');
  i < 2 ? num(x + w, y) : str(x + w, y, '');
});

// procedure(x)
hat(C.proc, 314, 363.7, 113.4, 25, 76, 432.8);
gear(326, 372.2); label(338.6, 371.8, 'to'); field(350.6, 371.8, 'procedure', 51.5);
tint(411, 13, 371.8, 'x'); label(321.3, 389, 'do');
setVar(339, 381.3, 126, 'global current', 32.7, true);
value(C.math, 465, 381.3, 304, 32.7);
gear(477, 390);
value(C.math, 495, 385, 192.7, 25.3);
gear(506.5, 393.9);
getVar(524.3, 389, 'global current');
label(637, 397.3, '×');
num(654.3, 389, '10');
label(694, 392.7, '+');
getVar(711, 385, 'x');
setLabel(339, 414, true);
getVar(485.4, 414, 'global current');

// operatorclick(operatortext)
hat(C.proc, 323, 458.7, 172.6, 25.2, 354.8, 806.3);
gear(335, 467.2); label(347.5, 467, 'to'); field(359.6, 467, 'operatorclick', 63);
tint(431.5, 60.5, 467, 'operatortext'); label(330, 484, 'do');
out += `<path fill="${C.ctl}" stroke="#fff" stroke-opacity=".3" stroke-width=".8" d="M348.200 481q0-5 5-5h5.400l4 2.800h2.200l4-2.800h34v25.300h-20v216h19v8.500h-19v17.700h19v8.500h-53.600z"/>`;
gear(360.2, 484.8); label(373.3, 484.3, 'if'); label(355, 509, 'then'); label(355, 733.7, 'else');
value(C.logic, 402.6, 476.5, 184.9, 24.8);
getVar(413.8, 480.2, 'global previous'); drop(529, 488.3, '≠', C.logic, 23.6); num(560.8, 480.2);
operatorIf(382.1, 501.3, 'previous');
setVar(382, 725.7, 131.5, 'global previous', 17.5, true, true); getVar(513.5, 725.7, 'global current');
setVar(348.2, 752, 126, 'global current', 17.4); num(474.2, 752);
setVar(348.2, 769.6, 131.8, 'global operator', 17.4); getVar(480, 769.6, 'operatortext');
setLabel(348.2, 787.2, true); getVar(494.6, 787.2, 'global operator');

// event handlers
[[855.5, 284.3, 'Button1'], [1091.4, 282.3, 'Button2'], [1323.9, 278.3, 'Button3'], [1557.9, 274.3, 'Button4'],
 [859.6, 351.7, 'Button5'], [1095.2, 356.7, 'Button6'], [1330.7, 350.5, 'Button7'], [1563.6, 344.6, 'Button8'],
 [873.4, 433.7, 'Button9'], [1117, 433.7, 'button10']].forEach(([x, y, n]) => handler(x, y, n, 'procedure', 'x'));
[[1581.4, 423, 'plusbutton'], [877.5, 520, 'minusbutton'], [1161.4, 528, 'intobutton'], [1425, 521.3, 'dividebutton']]
  .forEach(([x, y, n]) => handler(x, y, n, 'operatorclick', 'operatortext'));

when(1359.6, 427.3, 'reset', 78.5, 498.6);
setVar(1384.7, 444.4, 126, 'global current', 17.4, true); num(1510.7, 444.4);
setVar(1384.7, 462, 132.1, 'global previous', 17.4); num(1516.8, 462);
setLabel(1384.7, 479.6, true); str(1531.1, 479.6, '');

when(874.6, 590.3, 'equalsbutton', 276.5, 859.6);
operatorIf(899.8, 607.8, 'current');
setLabel(899.8, 822.8, false); getVar(1046.2, 822.8, 'global current');
setVar(899.8, 840.4, 132.7, 'global previous', 17.4, false, true); num(1032.5, 840.4);

document.getElementById('blocks').innerHTML = out;
```
